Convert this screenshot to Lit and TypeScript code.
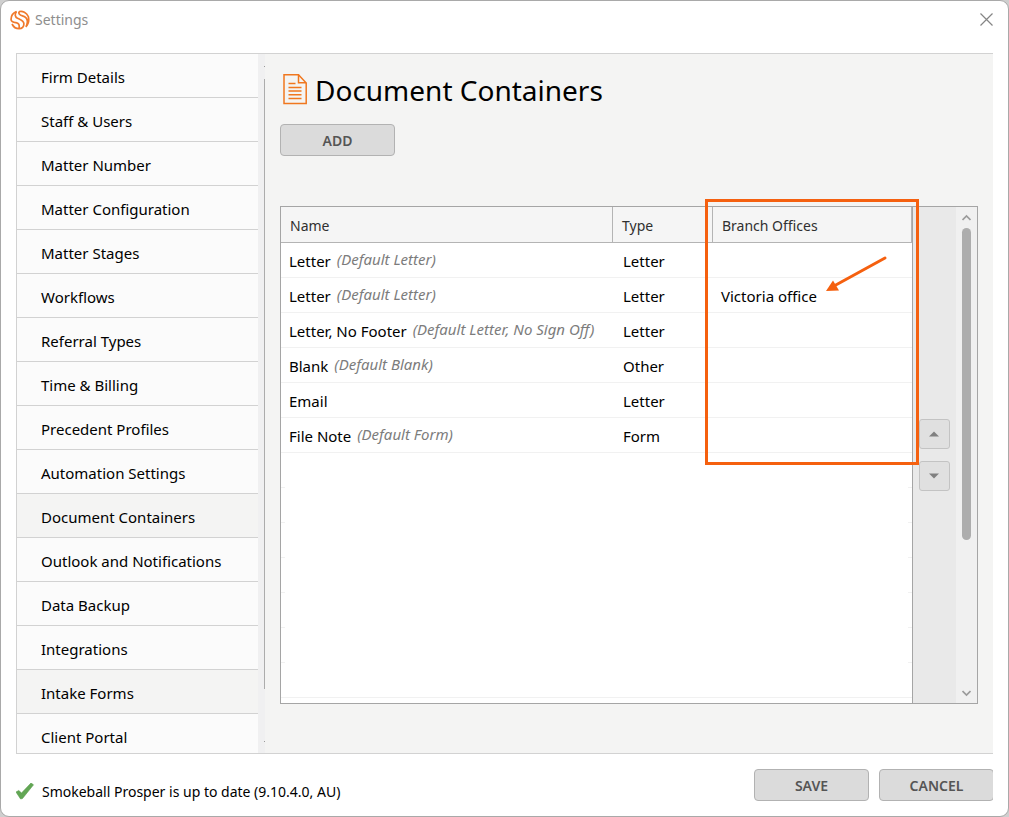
import { LitElement, html, css, nothing } from "lit";
import { customElement, property, state } from "lit/decorators.js";
import { classMap } from "lit/directives/class-map.js";

const SECTIONS = [
  "Firm Details",
  "Staff & Users",
  "Matter Number",
  "Matter Configuration",
  "Matter Stages",
  "Workflows",
  "Referral Types",
  "Time & Billing",
  "Precedent Profiles",
  "Automation Settings",
  "Document Containers",
  "Outlook and Notifications",
  "Data Backup",
  "Integrations",
  "Intake Forms",
  "Client Portal",
];

interface ContainerRow {
  name: string;
  note?: string;
  type: string;
  branch?: string;
}

const ROWS: ContainerRow[] = [
  { name: "Letter", note: "(Default Letter)", type: "Letter" },
  { name: "Letter", note: "(Default Letter)", type: "Letter", branch: "Victoria office" },
  { name: "Letter, No Footer", note: "(Default Letter, No Sign Off)", type: "Letter" },
  { name: "Blank", note: "(Default Blank)", type: "Other" },
  { name: "Email", type: "Letter" },
  { name: "File Note", note: "(Default Form)", type: "Form" },
];

@customElement("settings-nav")
class SettingsNav extends LitElement {
  @property() selected = "";
  @property() hovered = "";

  static styles = css`
    :host {
      display: flex;
      flex: 0 0 248px;
      min-height: 0;
      overflow: hidden;
    }
    .list {
      flex: 1;
      margin: 0;
      padding: 0;
      list-style: none;
      background: #fbfbfb;
      overflow: hidden;
    }
    .link {
      display: block;
      box-sizing: border-box;
      height: 44px;
      padding: 2px 24px 0;
      border-bottom: 1px solid #d2d2d2;
      font-size: 15px;
      line-height: 43px;
      color: #000;
      text-decoration: none;
      white-space: nowrap;
    }
    .active {
      background: #f4f4f3;
    }
    .track {
      display: flex;
      flex: 0 0 7px;
      flex-direction: column;
      align-items: flex-end;
      justify-content: space-between;
      background: #f0f0f1;
      padding: 12px 0 11px;
      box-sizing: border-box;
    }
    .dot {
      width: 1px;
      height: 1px;
      background: #9a9a9a;
    }
    .thumb {
      flex: 1;
      width: 1px;
      margin: 12px 0 52px;
      background: #acacac;
    }
  `;

  render() {
    return html`
      <ul class="list">
        ${SECTIONS.map(
          (label) => html`<li>
            <a
              class=${classMap({ link: true, active: label === this.selected || label === this.hovered })}
              href="#"
              >${label}</a
            >
          </li>`
        )}
      </ul>
      <div class="track">
        <div class="dot"></div>
        <div class="thumb"></div>
        <div class="dot"></div>
      </div>
    `;
  }
}

@customElement("container-grid")
class ContainerGrid extends LitElement {
  static styles = css`
    :host {
      display: flex;
      flex: 1;
      min-height: 0;
      border: 1px solid #a5a5a5;
      background: #fff;
    }
    .grid {
      position: relative;
      display: flex;
      flex: 1;
      flex-direction: column;
      min-width: 0;
      border-right: 1px solid #a5a5a5;
    }
    .table {
      width: 100%;
      table-layout: fixed;
      border-collapse: separate;
      border-spacing: 0;
    }
    .name {
      width: 332px;
    }
    .type {
      width: 100px;
    }
    th {
      box-sizing: border-box;
      height: 36px;
      padding: 2px 9px 0;
      border-right: 1px solid #b4b4b4;
      border-bottom: 1px solid #b4b4b4;
      background: #f5f5f5;
      color: #303030;
      font-size: 14px;
      font-weight: 400;
      line-height: 20px;
      text-align: left;
    }
    td {
      box-sizing: border-box;
      height: 35px;
      padding: 2px 8px 0;
      border-bottom: 1px solid #f1f1f1;
      font-size: 15px;
      line-height: 20px;
      white-space: nowrap;
    }
    td + td {
      padding-left: 10px;
    }
    td + td + td {
      padding-left: 8px;
    }
    .entry {
      display: flex;
      align-items: flex-start;
      gap: 6px;
    }
    .note {
      color: #7c7c7c;
      font-size: 15px;
      font-style: italic;
      line-height: 16px;
    }
    .filler {
      flex: 1;
      overflow: hidden;
    }
    .blank {
      display: flex;
      align-items: flex-end;
      justify-content: space-between;
      height: 35px;
    }
    .tick {
      width: 4px;
      height: 1px;
      background: #f1f1f1;
    }
    .blank:last-child .tick {
      flex: 1;
    }
    .highlight {
      position: absolute;
      top: -8px;
      right: -7px;
      box-sizing: border-box;
      width: 214px;
      height: 266px;
      border: 3px solid #f5600f;
      pointer-events: none;
      z-index: 1;
    }
    .arrow {
      display: block;
      margin: 52px 0 0 116px;
    }
    .order {
      display: flex;
      flex: 0 0 37px;
      flex-direction: column;
      align-items: flex-start;
      justify-content: center;
      gap: 12px;
      padding: 0 0 0 6px;
      background: #e9e9e9;
    }
    .move {
      display: grid;
      place-items: center;
      width: 31px;
      height: 30px;
      padding: 0 2px 1px 0;
      border: 1px solid #c3c3c3;
      border-radius: 3px;
      background: #e0e0e0;
    }
    .scroll {
      display: flex;
      flex: 0 0 21px;
      flex-direction: column;
      align-items: center;
      background: #f0f0f0;
      padding: 7px 0 6px;
      box-sizing: border-box;
    }
    .bar {
      flex: 1;
      display: flex;
      flex-direction: column;
      margin: 6px 0;
    }
    .thumb {
      width: 9px;
      height: 68.5%;
      border-radius: 5px;
      background: #adadad;
    }
  `;

  render() {
    return html`
      <div class="grid">
        <table class="table">
          <colgroup>
            <col class="name" />
            <col class="type" />
            <col />
          </colgroup>
          <thead>
            <tr>
              <th>Name</th>
              <th>Type</th>
              <th>Branch Offices</th>
            </tr>
          </thead>
          <tbody>
            ${ROWS.map(
              (row) => html`<tr>
                <td>
                  <div class="entry">
                    <span>${row.name}</span>
                    ${row.note ? html`<span class="note">${row.note}</span>` : nothing}
                  </div>
                </td>
                <td>${row.type}</td>
                <td>${row.branch ?? nothing}</td>
              </tr>`
            )}
          </tbody>
        </table>
        <div class="filler">
          ${Array.from(
            { length: 7 },
            () => html`<div class="blank"><span class="tick"></span><span class="tick"></span></div>`
          )}
        </div>
        <div class="highlight">
          <svg class="arrow" width="64" height="40" viewBox="0 0 64 40">
            <path d="M61 4 10 32" fill="none" stroke="#f5600f" stroke-width="3" stroke-linecap="round" />
            <path d="M2 37 9 26.500 15 36.500Z" fill="#f5600f" />
          </svg>
        </div>
      </div>
      <div class="order">
        <button class="move" aria-label="Move up">
          <svg width="10" height="6" viewBox="0 0 10 6"><path d="M0 5.500 5 .5 10 5.500Z" fill="#808080" /></svg>
        </button>
        <button class="move" aria-label="Move down">
          <svg width="10" height="6" viewBox="0 0 10 6"><path d="M0 .5 5 5.500 10 .5Z" fill="#808080" /></svg>
        </button>
      </div>
      <div class="scroll">
        <svg width="9" height="8" viewBox="0 0 9 8">
          <path d="M.5 6 4.500 2 8.500 6" fill="none" stroke="#9b9b9b" stroke-width="1.700" />
        </svg>
        <div class="bar"><div class="thumb"></div></div>
        <svg width="9" height="8" viewBox="0 0 9 8">
          <path d="M.5 2 4.500 6 8.500 2" fill="none" stroke="#9b9b9b" stroke-width="1.700" />
        </svg>
      </div>
    `;
  }
}

@customElement("app-root")
class AppRoot extends LitElement {
  @state() selected = "Document Containers";

  static styles = css`
    :host {
      display: block;
      height: 100vh;
      background: #cfcfcf;
      font-family: "Noto Sans", "Open Sans", sans-serif;
      color: #000;
    }
    .window {
      display: flex;
      flex-direction: column;
      box-sizing: border-box;
      height: 100%;
      border: 1px solid #a9a9a9;
      border-radius: 9px;
      background: #fff;
    }
    .titlebar {
      display: flex;
      align-items: center;
      box-sizing: border-box;
      height: 52px;
      padding: 0 15px 15px 9px;
    }
    .title {
      flex: 1;
      margin-left: 5px;
      color: #8e8e8e;
      font-size: 14px;
      line-height: 20px;
    }
    .close {
      display: grid;
      padding: 0;
      border: 0;
      background: none;
    }
    .frame {
      display: flex;
      flex: 1;
      min-height: 0;
      margin: 0 15px;
      border: solid #d2d2d2;
      border-width: 1px 0 1px 1px;
    }
    .main {
      display: flex;
      flex: 1;
      flex-direction: column;
      min-width: 0;
      padding: 17px 15px 49px;
      background: #f4f4f3;
    }
    .heading {
      display: flex;
      align-items: center;
      gap: 8px;
      padding-left: 3px;
      height: 38px;
      margin: 0 0 15px;
      font-size: 28px;
      font-weight: 400;
      line-height: 38px;
    }
    .button {
      box-sizing: border-box;
      width: 115px;
      height: 32px;
      padding: 1px 0 0;
      border: 1px solid #b2b2b2;
      border-radius: 4px;
      background: #dbdbdb;
      color: #555;
      font-family: inherit;
      font-size: 14px;
      font-weight: 600;
      line-height: 20px;
    }
    .add {
      margin-bottom: 50px;
    }
    .footer {
      display: flex;
      align-items: center;
      box-sizing: border-box;
      height: 62px;
      padding: 0 15px;
    }
    /* The action row runs one pixel past the frame, which trims its last border. */
    .actions {
      display: flex;
      flex: 0 0 239px;
      gap: 10px;
      overflow: hidden;
    }
    .actions .button {
      flex: none;
    }
    .status {
      display: flex;
      flex: 1;
      align-items: center;
      gap: 7px;
      padding-top: 13px;
      font-size: 14px;
      line-height: 20px;
    }
  `;

  render() {
    return html`
      <div class="window">
        <header class="titlebar">
          <svg width="20" height="20" viewBox="0 0 20 20" fill="none" stroke="#f07a2c" stroke-width="1.700">
            <path d="M6.500 1.500C2.500 3.200.9 6.500 1.100 9.800 1.500 12.200 3.500 12.300 6 12.600 8.500 13 9.800 14.500 9 18.500" />
            <path d="M6.500 1.500C4.500 4.200 4.800 6.800 7.500 8.300 10.500 9.800 13.800 10.500 13.900 13.800 13.900 16.700 12 18.700 9 18.700 6 18.700 3.500 17 2 14" />
            <path d="M18.300 6.500C16.500 2.500 12.500.7 9.500 1.500 7.900 3.200 9.500 5 12.500 5.900 16 7 17.800 9 17.300 12.500 17 14.500 16.500 15.800 15.800 16.800 18.300 14.300 19.300 10.500 18.300 6.500" />
          </svg>
          <span class="title">Settings</span>
          <button class="close" aria-label="Close">
            <svg width="13" height="13" viewBox="0 0 13 13">
              <path d="M.5.5 12.500 12.500M12.500.5.5 12.500" stroke="#858585" stroke-width="1.200" />
            </svg>
          </button>
        </header>
        <div class="frame">
          <settings-nav selected=${this.selected} hovered="Intake Forms"></settings-nav>
          <main class="main">
            <h1 class="heading">
              <svg width="24" height="32" viewBox="0 0 24 32" fill="none" stroke="#f0771f" stroke-width="1.500">
                <path d="M1 .8H15.500L23.200 9V29.500H1Z" />
                <path d="M15.500 .8V8.800H23.200" />
                <path d="M5.500 9.500H12.500M5.500 13.500H18.500M5.500 17H18.500M5.500 20.800H18.500M5.500 24.500H18.500" />
              </svg>
              Document Containers
            </h1>
            <button class="button add">ADD</button>
            <container-grid></container-grid>
          </main>
        </div>
        <footer class="footer">
          <div class="status">
            <svg width="19" height="18" viewBox="0 0 19 18">
              <path d="M0 9 2.800 7.500 5.500 10 15 0 17.500 1.800 6.500 15.500 4.600 16Z" fill="#62a654" stroke="#559c48" stroke-width=".6" stroke-linejoin="round" />
            </svg>
            <span>Smokeball Prosper is up to date (9.10.4.0, AU)</span>
          </div>
          <div class="actions">
            <button class="button">SAVE</button>
            <button class="button">CANCEL</button>
          </div>
        </footer>
      </div>
    `;
  }
}
